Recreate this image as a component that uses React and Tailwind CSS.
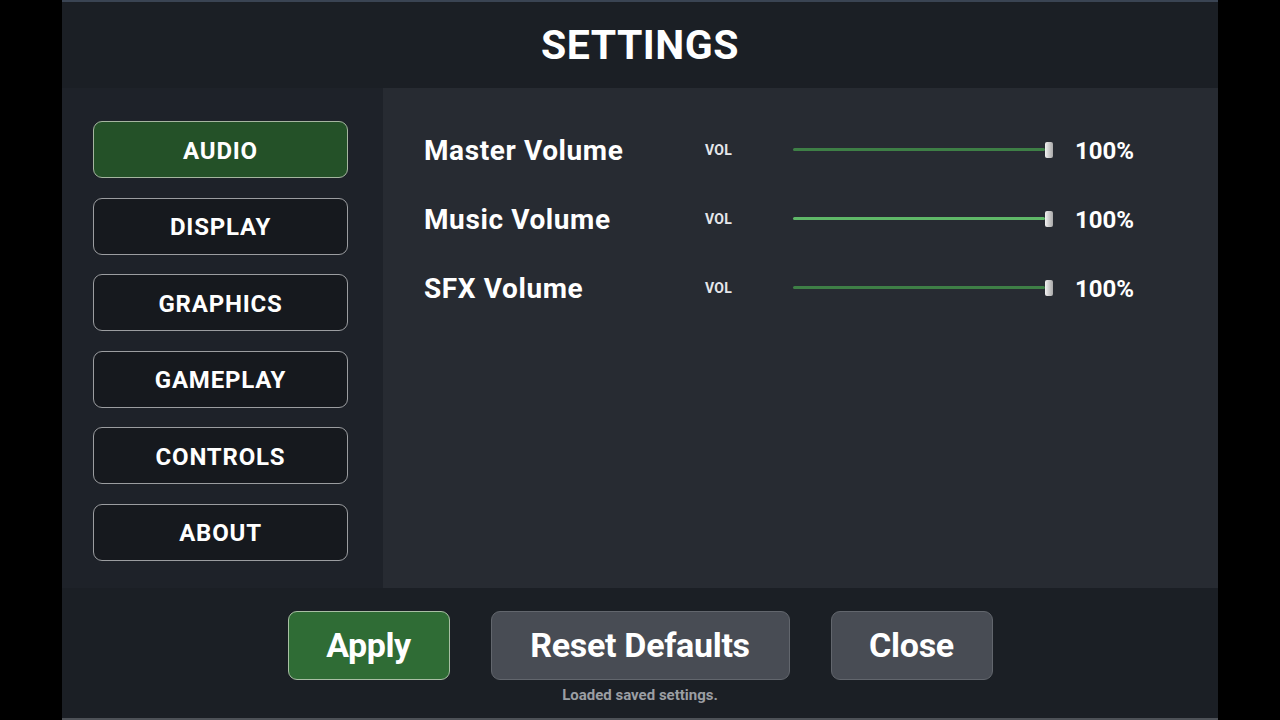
import React, { useState } from "react";

const font = { fontFamily: "Roboto, 'Noto Sans', sans-serif" };

const tabs = ["AUDIO", "DISPLAY", "GRAPHICS", "GAMEPLAY", "CONTROLS", "ABOUT"];

const volumes = [
    { label: "Master Volume", value: 100, bright: false },
    { label: "Music Volume", value: 100, bright: true },
    { label: "SFX Volume", value: 100, bright: false },
];

function VolumeRow({ label, value, bright }) {
    return (
        <div className="flex items-center h-[69px]">
            <div className="w-[281px] text-[28px] font-bold text-white tracking-[0.6px] pt-[3px]">{label}</div>
            <div className="w-[88px] text-[14px] font-bold text-gray-200 tracking-[0.3px] pt-[1px]">VOL</div>
            <div className="relative w-[260px] h-[16px] flex items-center">
                <div
                    className={
                        bright
                            ? "h-[3px] bg-[#5fb868] rounded-full"
                            : "h-[3px] bg-[#3e7f46] rounded-full"
                    }
                    style={{ width: `${(value / 100) * 252}px` }}
                />
                <div className="absolute right-0 top-0 w-[8px] h-[16px] rounded-[2px] bg-gradient-to-r from-[#f2f2f2] to-[#a9a9a9]" />
            </div>
            <div className="ml-[22px] text-[24px] font-bold text-white pt-[2px]">{value}%</div>
        </div>
    );
}

export default function App() {
    const [activeTab, setActiveTab] = useState("AUDIO");

    return (
        <div className="w-full h-[720px] bg-black flex justify-center overflow-hidden" style={font}>
            <div className="w-[1156px] h-full bg-[#1b1f25] border-t-2 border-t-[#3a4453] border-b-2 border-b-[#4d5157] flex flex-col">
                {/* Header */}
                <div className="h-[86px] flex items-center justify-center">
                    <h1 className="text-[41px] font-bold text-white tracking-[0.5px] mt-[2px]">SETTINGS</h1>
                </div>

                {/* Body */}
                <div className="flex h-[500px]">
                    <div className="w-[321px] bg-[#1e2229] pt-[33px] pl-[31px] flex flex-col gap-[19.6px]">
                        {tabs.map((tab) => (
                            <button
                                key={tab}
                                onClick={() => setActiveTab(tab)}
                                className={
                                    activeTab === tab
                                        ? "w-[255px] h-[57px] rounded-[9px] border border-[#a5b5a0] bg-[#245128] text-white text-[24px] font-bold tracking-[0.8px] pt-[2px]"
                                        : "w-[255px] h-[57px] rounded-[9px] border border-[#9b9da0] bg-[#16191e] text-white text-[24px] font-bold tracking-[0.8px] pt-[2px]"
                                }
                            >
                                {tab}
                            </button>
                        ))}
                    </div>
                    <div className="flex-1 bg-[#272b32] pt-[27px] pl-[41px]">
                        {volumes.map((v) => (
                            <VolumeRow key={v.label} {...v} />
                        ))}
                    </div>
                </div>

                {/* Footer */}
                <div className="flex-1 flex flex-col items-center pt-[23px]">
                    <div className="flex gap-[41px]">
                        <button className="w-[162px] h-[69px] rounded-[9px] border border-[#a8bfa4] bg-[#2f6c35] text-white text-[34px] font-bold tracking-[-0.4px]">
                            Apply
                        </button>
                        <button className="w-[299px] h-[69px] rounded-[9px] border border-[#62666d] bg-[#484c54] text-white text-[34px] font-bold tracking-[-0.3px]">
                            Reset Defaults
                        </button>
                        <button className="w-[162px] h-[69px] rounded-[9px] border border-[#62666d] bg-[#484c54] text-white text-[34px] font-bold tracking-[-0.3px]">
                            Close
                        </button>
                    </div>
                    <div className="mt-[4px] text-[15px] font-bold text-[#9b9ea3]">Loaded saved settings.</div>
                </div>
            </div>
        </div>
    );
}
